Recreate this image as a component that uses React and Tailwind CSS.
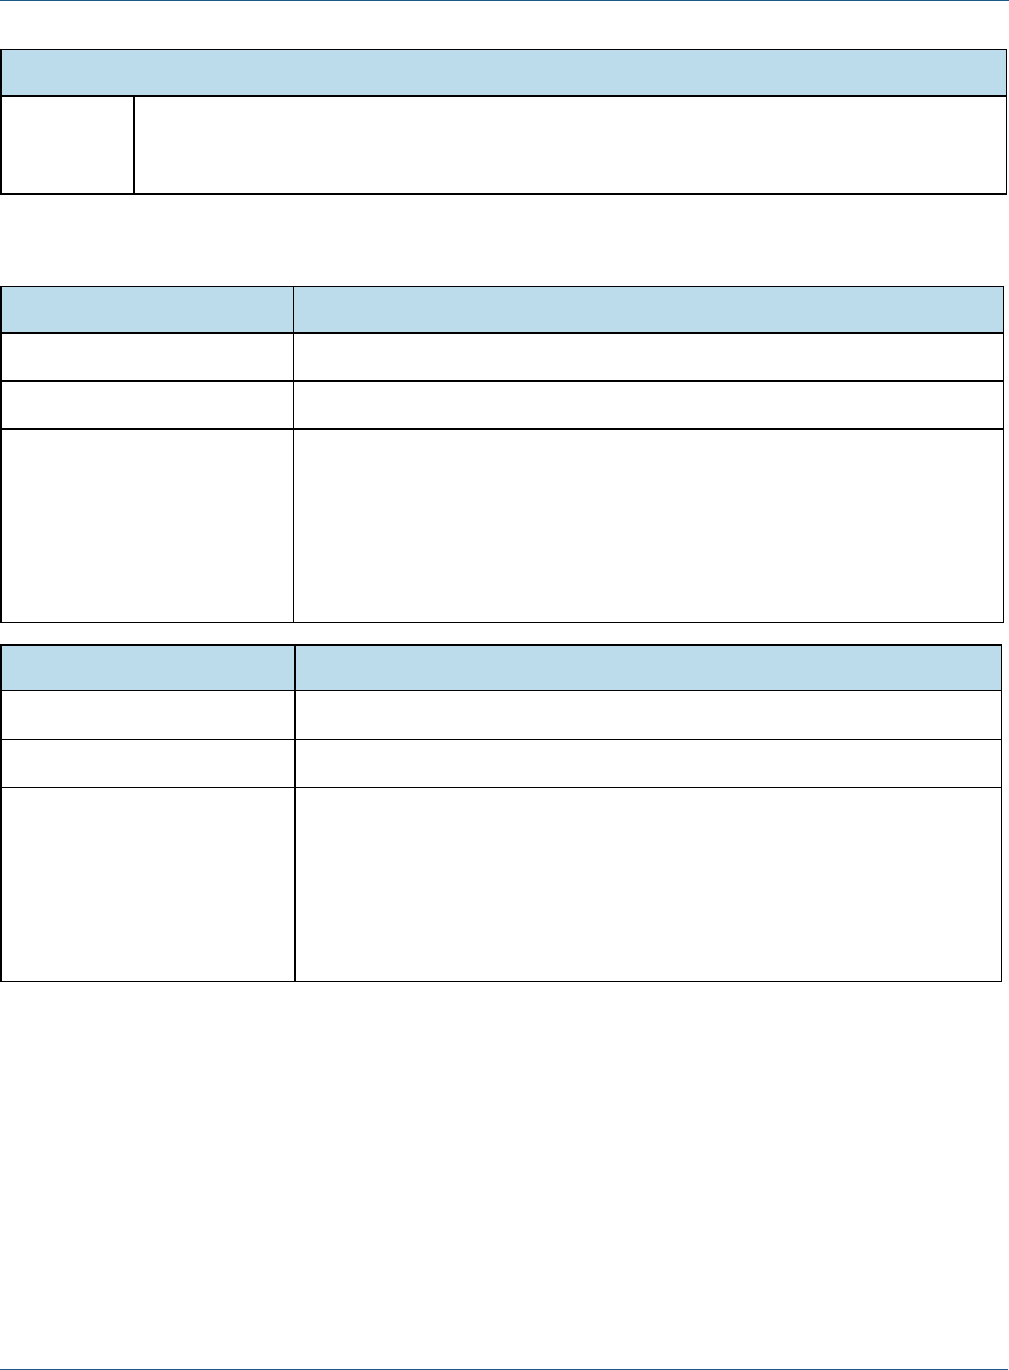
export default function App() {
  return (
    <div className="relative w-[1009px] h-[1370px] bg-white font-['Liberation_Sans',sans-serif]">
      {/* top rule */}
      <div className="h-px w-full bg-[#1b5a86]"></div>

      {/* table 1 */}
      <div className="mt-[48px] w-[1007px] border-t border-l-2 border-r border-black">
        <div className="h-[47px] bg-[#bddceb] border-b-2 border-black"></div>
        <div className="flex h-[98px] border-b-2 border-black">
          <div className="w-[133px] border-r-2 border-black"></div>
          <div className="flex-1"></div>
        </div>
      </div>

      {/* table 2 */}
      <div className="mt-[91px] w-[1004px] border-t border-l-2 border-r border-black">
        <div className="flex h-[47px] bg-[#bddceb] border-b-2 border-black">
          <div className="w-[292px] border-r border-black"></div>
          <div className="flex-1"></div>
        </div>
        {[48, 48, 193].map((h, i) => (
          <div
            key={i}
            className={`flex border-black ${i < 2 ? "border-b-2" : "border-b"}`}
            style={{ height: h }}
          >
            <div className="w-[292px] border-r border-black"></div>
            <div className="flex-1"></div>
          </div>
        ))}
      </div>

      {/* table 3 */}
      <div className="mt-[21px] w-[1002px] border-t-2 border-l-2 border-r border-black">
        <div className="flex h-[45px] bg-[#bddceb] border-b border-black">
          <div className="w-[294px] border-r-2 border-black"></div>
          <div className="flex-1"></div>
        </div>
        {[49, 48, 194].map((h, i) => (
          <div key={i} className="flex border-b border-black" style={{ height: h }}>
            <div className="w-[294px] border-r-2 border-black"></div>
            <div className="flex-1"></div>
          </div>
        ))}
      </div>

      {/* bottom rule */}
      <div className="absolute left-0 bottom-0 h-px w-[1008px] bg-[#1b5a86]"></div>
    </div>
  );
}
